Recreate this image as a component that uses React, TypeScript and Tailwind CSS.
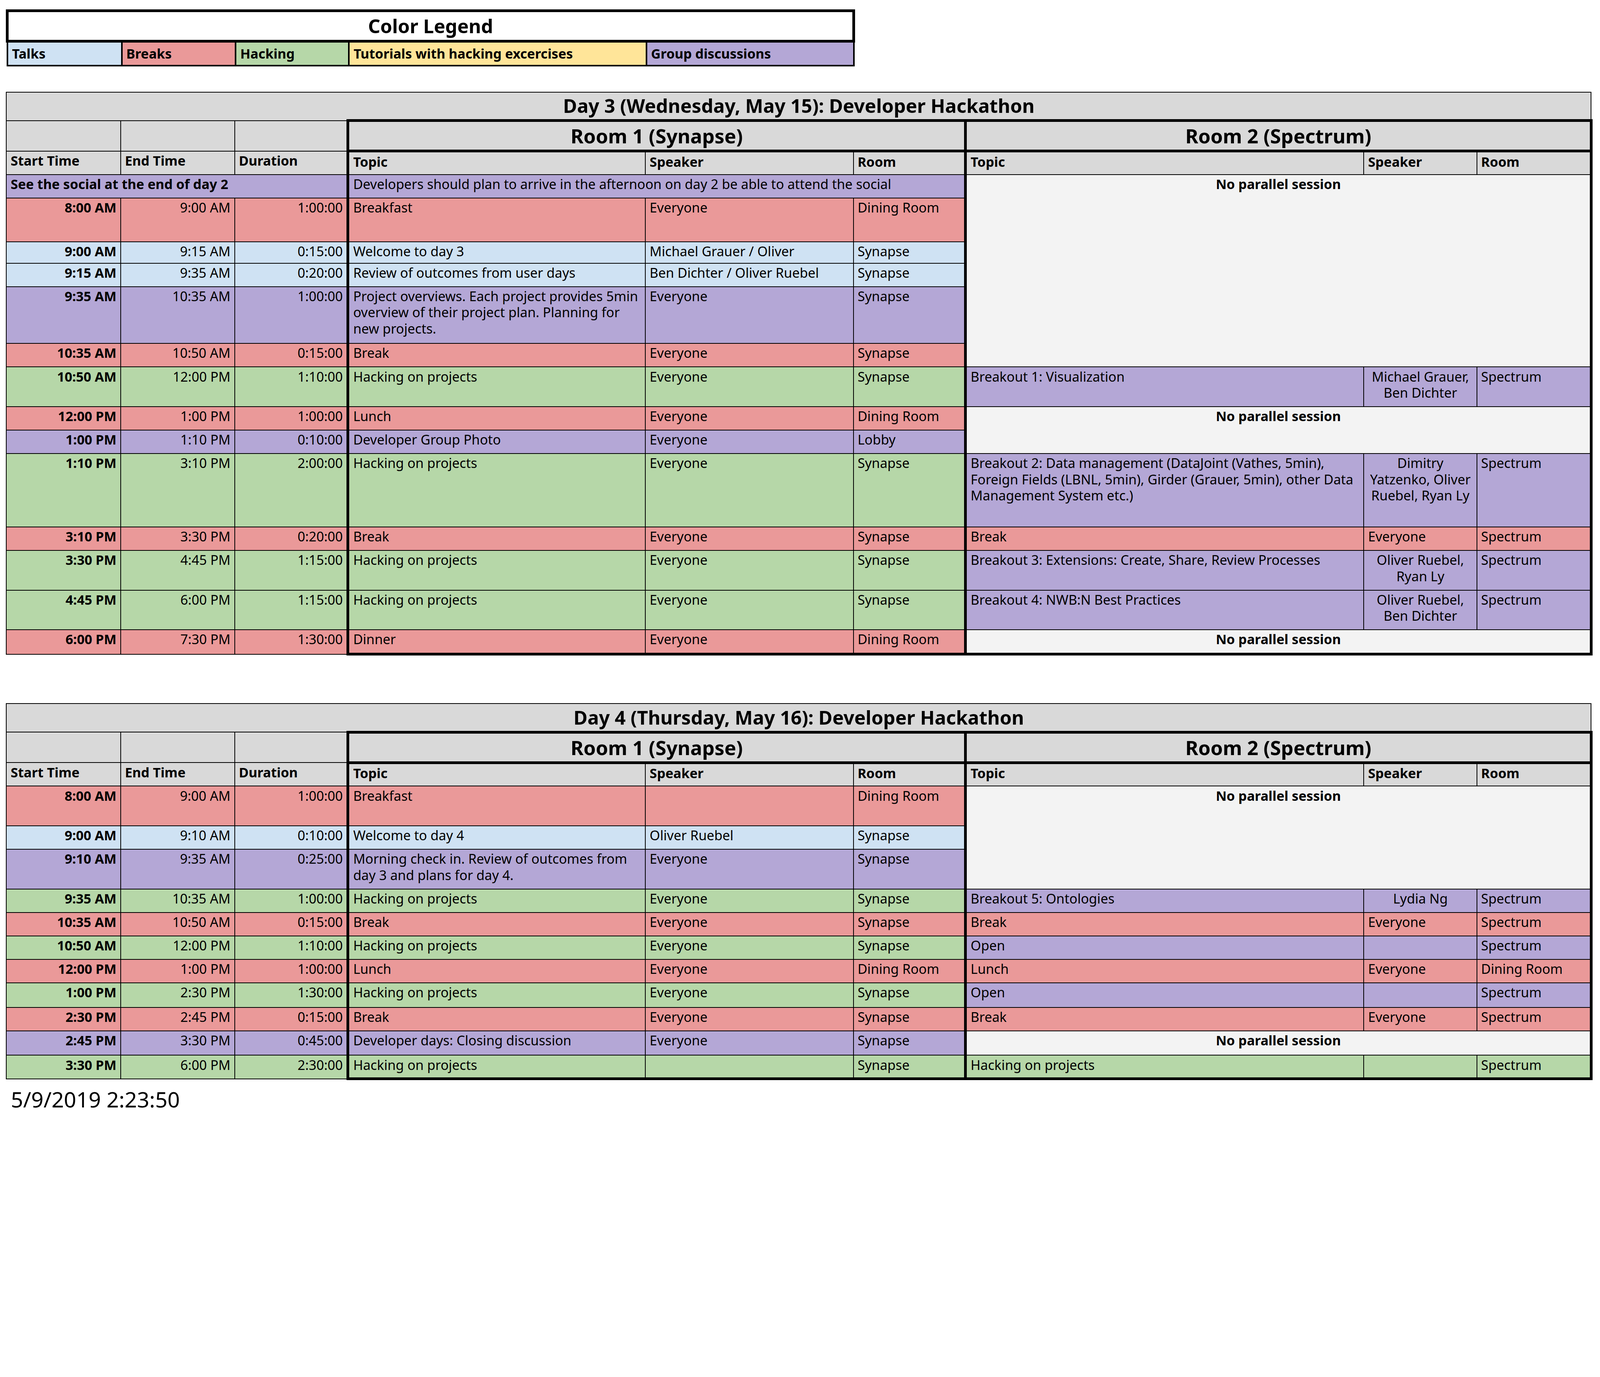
import React from "react";

const C = {
  talk: "bg-[#cfe2f3]",
  brk: "bg-[#ea9999]",
  hack: "bg-[#b6d7a8]",
  tut: "bg-[#ffe599]",
  grp: "bg-[#b4a7d6]",
  gray: "bg-[#d9d9d9]",
  none: "bg-[#f3f3f3]",
};

type Room2 =
  | { kind: "none"; span: number }
  | { kind: "row"; color: string; topic: string; speaker: string; room: string; center?: boolean }
  | null;

type Row = {
  h: string;
  color: string;
  start: string;
  end: string;
  dur: string;
  topic: string;
  speaker: string;
  room: string;
  r2: Room2;
  last?: boolean;
};

const td = "border-[3px] border-black align-top px-[12px] pt-[4px] leading-[51px] overflow-hidden";

function Room2Cells({ r2, last }: { r2: Room2; last?: boolean }) {
  if (!r2) return null;
  const lb = last ? " border-b-[9px]" : "";
  if (r2.kind === "none")
    return (
      <td colSpan={3} rowSpan={r2.span} className={`${td} ${C.none} border-l-[9px] border-r-[9px] text-center font-bold${lb}`}>
        No parallel session
      </td>
    );
  return (
    <>
      <td className={`${td} ${r2.color} border-l-[9px]${lb}`}>{r2.topic}</td>
      <td className={`${td} ${r2.color}${lb} ${r2.center ? "text-center" : ""}`}>{r2.speaker}</td>
      <td className={`${td} ${r2.color} border-r-[9px]${lb}`}>{r2.room}</td>
    </>
  );
}

function DataRow({ r }: { r: Row }) {
  const lb = r.last ? " border-b-[9px]" : "";
  return (
    <tr className={r.h}>
      <td className={`${td} ${r.color} text-right font-bold`}>{r.start}</td>
      <td className={`${td} ${r.color} text-right`}>{r.end}</td>
      <td className={`${td} ${r.color} text-right`}>{r.dur}</td>
      <td className={`${td} ${r.color} border-l-[9px]${lb}`}>{r.topic}</td>
      <td className={`${td} ${r.color}${lb}`}>{r.speaker}</td>
      <td className={`${td} ${r.color} border-r-[9px]${lb}`}>{r.room}</td>
      <Room2Cells r2={r.r2} last={r.last} />
    </tr>
  );
}

function Cols() {
  return (
    <colgroup>
      {[360, 359, 357, 937, 655, 353, 1255, 356, 360].map((w, i) => (
        <col key={i} style={{ width: w }} />
      ))}
    </colgroup>
  );
}

function Header({ title }: { title: string }) {
  return (
    <>
      <tr className="h-[90px]">
        <td colSpan={9} className={`border-[3px] border-black ${C.gray} text-center font-bold text-[60px] leading-[80px]`}>
          {title}
        </td>
      </tr>
      <tr className="h-[96px]">
        <td className={`border-[3px] border-black ${C.gray}`} />
        <td className={`border-[3px] border-black ${C.gray}`} />
        <td className={`border-[3px] border-black ${C.gray}`} />
        <td colSpan={3} className={`border-[9px] border-black ${C.gray} text-center font-bold text-[62px] leading-[80px]`}>
          Room 1 (Synapse)
        </td>
        <td colSpan={3} className={`border-[9px] border-black ${C.gray} text-center font-bold text-[62px] leading-[80px]`}>
          Room 2 (Spectrum)
        </td>
      </tr>
      <tr className="h-[74px] font-bold">
        <td className={`${td} ${C.gray}`}>Start Time</td>
        <td className={`${td} ${C.gray}`}>End Time</td>
        <td className={`${td} ${C.gray}`}>Duration</td>
        <td className={`${td} ${C.gray} border-l-[9px]`}>Topic</td>
        <td className={`${td} ${C.gray}`}>Speaker</td>
        <td className={`${td} ${C.gray} border-r-[9px]`}>Room</td>
        <td className={`${td} ${C.gray} border-l-[9px]`}>Topic</td>
        <td className={`${td} ${C.gray}`}>Speaker</td>
        <td className={`${td} ${C.gray} border-r-[9px]`}>Room</td>
      </tr>
    </>
  );
}

const day3: Row[] = [
  { h: "h-[138px]", color: C.brk, start: "8:00 AM", end: "9:00 AM", dur: "1:00:00", topic: "Breakfast", speaker: "Everyone", room: "Dining Room", r2: null },
  { h: "h-[67px]", color: C.talk, start: "9:00 AM", end: "9:15 AM", dur: "0:15:00", topic: "Welcome to day 3", speaker: "Michael Grauer / Oliver", room: "Synapse", r2: null },
  { h: "h-[74px]", color: C.talk, start: "9:15 AM", end: "9:35 AM", dur: "0:20:00", topic: "Review of outcomes from user days", speaker: "Ben Dichter / Oliver Ruebel", room: "Synapse", r2: null },
  { h: "h-[179px]", color: C.grp, start: "9:35 AM", end: "10:35 AM", dur: "1:00:00", topic: "Project overviews. Each project provides 5min overview of their project plan. Planning for new projects.", speaker: "Everyone", room: "Synapse", r2: null },
  { h: "h-[74px]", color: C.brk, start: "10:35 AM", end: "10:50 AM", dur: "0:15:00", topic: "Break", speaker: "Everyone", room: "Synapse", r2: null },
  { h: "h-[125px]", color: C.hack, start: "10:50 AM", end: "12:00 PM", dur: "1:10:00", topic: "Hacking on projects", speaker: "Everyone", room: "Synapse", r2: { kind: "row", color: C.grp, topic: "Breakout 1: Visualization", speaker: "Michael Grauer, Ben Dichter", room: "Spectrum", center: true } },
  { h: "h-[74px]", color: C.brk, start: "12:00 PM", end: "1:00 PM", dur: "1:00:00", topic: "Lunch", speaker: "Everyone", room: "Dining Room", r2: { kind: "none", span: 2 } },
  { h: "h-[74px]", color: C.grp, start: "1:00 PM", end: "1:10 PM", dur: "0:10:00", topic: "Developer Group Photo", speaker: "Everyone", room: "Lobby", r2: null },
  { h: "h-[231px]", color: C.hack, start: "1:10 PM", end: "3:10 PM", dur: "2:00:00", topic: "Hacking on projects", speaker: "Everyone", room: "Synapse", r2: { kind: "row", color: C.grp, topic: "Breakout 2: Data management (DataJoint (Vathes, 5min), Foreign Fields (LBNL, 5min), Girder (Grauer, 5min),  other Data Management System etc.)", speaker: "Dimitry Yatzenko, Oliver Ruebel, Ryan Ly", room: "Spectrum", center: true } },
  { h: "h-[74px]", color: C.brk, start: "3:10 PM", end: "3:30 PM", dur: "0:20:00", topic: "Break", speaker: "Everyone", room: "Synapse", r2: { kind: "row", color: C.brk, topic: "Break", speaker: "Everyone", room: "Spectrum" } },
  { h: "h-[125px]", color: C.hack, start: "3:30 PM", end: "4:45 PM", dur: "1:15:00", topic: "Hacking on projects", speaker: "Everyone", room: "Synapse", r2: { kind: "row", color: C.grp, topic: "Breakout 3: Extensions: Create, Share, Review Processes", speaker: "Oliver Ruebel, Ryan Ly", room: "Spectrum", center: true } },
  { h: "h-[125px]", color: C.hack, start: "4:45 PM", end: "6:00 PM", dur: "1:15:00", topic: "Hacking on projects", speaker: "Everyone", room: "Synapse", r2: { kind: "row", color: C.grp, topic: "Breakout 4: NWB:N Best Practices", speaker: "Oliver Ruebel, Ben Dichter", room: "Spectrum", center: true } },
  { h: "h-[77px]", color: C.brk, start: "6:00 PM", end: "7:30 PM", dur: "1:30:00", topic: "Dinner", speaker: "Everyone", room: "Dining Room", r2: { kind: "none", span: 1 }, last: true },
];

const day4: Row[] = [
  { h: "h-[125px]", color: C.brk, start: "8:00 AM", end: "9:00 AM", dur: "1:00:00", topic: "Breakfast", speaker: "", room: "Dining Room", r2: { kind: "none", span: 3 } },
  { h: "h-[74px]", color: C.talk, start: "9:00 AM", end: "9:10 AM", dur: "0:10:00", topic: "Welcome to day 4", speaker: "Oliver Ruebel", room: "Synapse", r2: null },
  { h: "h-[125px]", color: C.grp, start: "9:10 AM", end: "9:35 AM", dur: "0:25:00", topic: "Morning check in. Review of outcomes from day 3 and plans for day 4.", speaker: "Everyone", room: "Synapse", r2: null },
  { h: "h-[74px]", color: C.hack, start: "9:35 AM", end: "10:35 AM", dur: "1:00:00", topic: "Hacking on projects", speaker: "Everyone", room: "Synapse", r2: { kind: "row", color: C.grp, topic: "Breakout 5: Ontologies", speaker: "Lydia Ng", room: "Spectrum", center: true } },
  { h: "h-[74px]", color: C.brk, start: "10:35 AM", end: "10:50 AM", dur: "0:15:00", topic: "Break", speaker: "Everyone", room: "Synapse", r2: { kind: "row", color: C.brk, topic: "Break", speaker: "Everyone", room: "Spectrum" } },
  { h: "h-[74px]", color: C.hack, start: "10:50 AM", end: "12:00 PM", dur: "1:10:00", topic: "Hacking on projects", speaker: "Everyone", room: "Synapse", r2: { kind: "row", color: C.grp, topic: "Open", speaker: "", room: "Spectrum" } },
  { h: "h-[74px]", color: C.brk, start: "12:00 PM", end: "1:00 PM", dur: "1:00:00", topic: "Lunch", speaker: "Everyone", room: "Dining Room", r2: { kind: "row", color: C.brk, topic: "Lunch", speaker: "Everyone", room: "Dining Room" } },
  { h: "h-[77px]", color: C.hack, start: "1:00 PM", end: "2:30 PM", dur: "1:30:00", topic: "Hacking on projects", speaker: "Everyone", room: "Synapse", r2: { kind: "row", color: C.grp, topic: "Open", speaker: "", room: "Spectrum" } },
  { h: "h-[74px]", color: C.brk, start: "2:30 PM", end: "2:45 PM", dur: "0:15:00", topic: "Break", speaker: "Everyone", room: "Synapse", r2: { kind: "row", color: C.brk, topic: "Break", speaker: "Everyone", room: "Spectrum" } },
  { h: "h-[77px]", color: C.grp, start: "2:45 PM", end: "3:30 PM", dur: "0:45:00", topic: "Developer days: Closing discussion", speaker: "Everyone", room: "Synapse", r2: { kind: "none", span: 1 } },
  { h: "h-[74px]", color: C.hack, start: "3:30 PM", end: "6:00 PM", dur: "2:30:00", topic: "Hacking on projects", speaker: "", room: "Synapse", r2: { kind: "row", color: C.hack, topic: "Hacking on projects", speaker: "", room: "Spectrum" }, last: true },
];

export default function App() {
  return (
    <div className="[zoom:0.8127] bg-white text-black text-[42px] [font-family:'Liberation_Sans',Arial,sans-serif] pl-[19px] pt-[29px] pb-[40px]">
      <table className="border-collapse table-fixed w-[2666px]">
        <colgroup>
          {[360, 359, 357, 937, 653].map((w, i) => (
            <col key={i} style={{ width: w }} />
          ))}
        </colgroup>
        <tbody>
          <tr className="h-[96px]">
            <td colSpan={5} className="border-[9px] border-black text-center font-bold text-[60px] leading-[70px]">
              Color Legend
            </td>
          </tr>
          <tr className="h-[77px] font-bold">
            {[
              [C.talk, "Talks"],
              [C.brk, "Breaks"],
              [C.hack, "Hacking"],
              [C.tut, "Tutorials with hacking excercises"],
              [C.grp, "Group discussions"],
            ].map(([c, t]) => (
              <td key={t} className={`border-[6px] border-black px-[12px] ${c} leading-[60px]`}>
                {t}
              </td>
            ))}
          </tr>
        </tbody>
      </table>

      <table className="border-collapse table-fixed w-[4992px] mt-[80px]">
        <Cols />
        <tbody>
          <Header title="Day 3 (Wednesday, May 15): Developer Hackathon" />
          <tr className="h-[74px]">
            <td colSpan={3} className={`${td} ${C.grp} font-bold`}>See the social at the end of day 2</td>
            <td colSpan={3} className={`${td} ${C.grp} border-l-[9px] border-r-[9px] whitespace-nowrap`}>
              Developers should plan to arrive in the afternoon on day 2 be able to attend the social
            </td>
            <Room2Cells r2={{ kind: "none", span: 6 }} />
          </tr>
          {day3.map((r, i) => (
            <DataRow key={i} r={r} />
          ))}
        </tbody>
      </table>

      <table className="border-collapse table-fixed w-[4992px] mt-[150px]">
        <Cols />
        <tbody>
          <Header title="Day 4 (Thursday, May 16): Developer Hackathon" />
          {day4.map((r, i) => (
            <DataRow key={i} r={r} />
          ))}
        </tbody>
      </table>

      <div className="text-[68px] leading-[80px] mt-[20px] pl-[15px]">5/9/2019 2:23:50</div>
    </div>
  );
}
